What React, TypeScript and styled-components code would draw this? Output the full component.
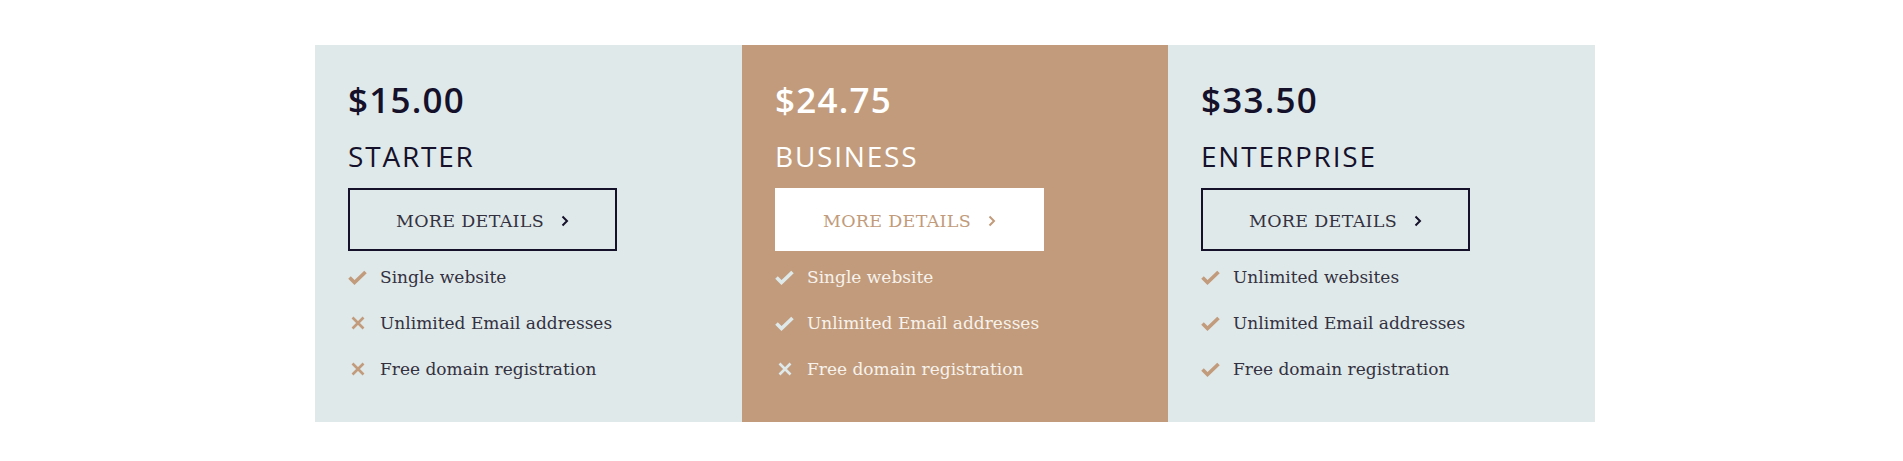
import styled, { createGlobalStyle } from "styled-components";

const GlobalStyle = createGlobalStyle`
  body {
    margin: 0;
    background: #ffffff;
  }
`;

const Section = styled.section`
  padding: 45px 0 39px 315px;
`;

const Plans = styled.div`
  display: grid;
  grid-template-columns: 427px 426px 427px;
`;

const Card = styled.div<{ $featured?: boolean }>`
  height: 377px;
  box-sizing: border-box;
  padding: 38px 33px 0;
  background: ${(p) => (p.$featured ? "#c19b7b" : "#e0e9ea")};
  color: ${(p) => (p.$featured ? "#ffffff" : "#15112b")};
`;

const Price = styled.div`
  font-family: "Open Sans", sans-serif;
  font-weight: 650;
  font-size: 35px;
  line-height: 34px;
  letter-spacing: 1.2px;
`;

const Name = styled.h2`
  margin: 25px 0 0;
  font-family: "Open Sans", sans-serif;
  font-weight: 500;
  font-size: 28px;
  line-height: 29px;
  letter-spacing: 1.8px;
`;

const DetailsButton = styled.a<{ $featured?: boolean }>`
  margin-top: 17px;
  width: 269px;
  height: 63px;
  box-sizing: border-box;
  padding-top: 3px;
  display: flex;
  align-items: center;
  justify-content: center;
  gap: 17px;
  border: 2px solid ${(p) => (p.$featured ? "#ffffff" : "#15112b")};
  background: ${(p) => (p.$featured ? "#ffffff" : "transparent")};
  color: ${(p) => (p.$featured ? "#c19b7b" : "#33313f")};
  font-family: "DejaVu Serif", serif;
  font-size: 17.5px;
  font-weight: 300;
  letter-spacing: 0.3px;
  text-decoration: none;
  cursor: pointer;
`;

const Features = styled.ul`
  list-style: none;
  margin: 14px 0 0;
  padding: 0;
  display: flex;
  flex-direction: column;
  gap: 22px;
`;

const Feature = styled.li<{ $featured?: boolean }>`
  display: flex;
  align-items: center;
  gap: 13px;
  height: 24px;
  font-family: "DejaVu Serif", serif;
  font-size: 17px;
  color: ${(p) => (p.$featured ? "#f7f2ec" : "#33313f")};
`;

const IconBox = styled.span`
  width: 19px;
  display: flex;
  justify-content: center;
`;

const Check = ({ color }: { color: string }) => (
  <svg width="19" height="15" viewBox="0 0 19 15">
    <polyline points="1.5,7.5 6.5,12.5 17.5,2" fill="none" stroke={color} strokeWidth="3.6" />
  </svg>
);

const Cross = ({ color }: { color: string }) => (
  <svg width="14" height="14" viewBox="0 0 14 14">
    <path d="M1.5 1.5 L12.5 12.5 M12.5 1.5 L1.5 12.5" fill="none" stroke={color} strokeWidth="2.6" />
  </svg>
);

const Chevron = ({ color }: { color: string }) => (
  <svg width="8" height="12" viewBox="0 0 8 12">
    <polyline points="1.5,1.5 6,6 1.5,10.5" fill="none" stroke={color} strokeWidth="2" />
  </svg>
);

type Plan = {
  price: string;
  name: string;
  featured?: boolean;
  features: { label: string; included: boolean }[];
};

const plans: Plan[] = [
  {
    price: "$15.00",
    name: "STARTER",
    features: [
      { label: "Single website", included: true },
      { label: "Unlimited Email addresses", included: false },
      { label: "Free domain registration", included: false },
    ],
  },
  {
    price: "$24.75",
    name: "BUSINESS",
    featured: true,
    features: [
      { label: "Single website", included: true },
      { label: "Unlimited Email addresses", included: true },
      { label: "Free domain registration", included: false },
    ],
  },
  {
    price: "$33.50",
    name: "ENTERPRISE",
    features: [
      { label: "Unlimited websites", included: true },
      { label: "Unlimited Email addresses", included: true },
      { label: "Free domain registration", included: true },
    ],
  },
];

export default function App() {
  return (
    <>
      <GlobalStyle />
      <Section>
        <Plans>
          {plans.map((plan) => {
            const iconColor = plan.featured ? "#dfe9ea" : "#c19b7b";
            return (
              <Card key={plan.name} $featured={plan.featured}>
                <Price>{plan.price}</Price>
                <Name>{plan.name}</Name>
                <DetailsButton $featured={plan.featured}>
                  MORE DETAILS
                  <Chevron color={plan.featured ? "#c19b7b" : "#15112b"} />
                </DetailsButton>
                <Features>
                  {plan.features.map((f) => (
                    <Feature key={f.label} $featured={plan.featured}>
                      <IconBox>
                        {f.included ? <Check color={iconColor} /> : <Cross color={iconColor} />}
                      </IconBox>
                      {f.label}
                    </Feature>
                  ))}
                </Features>
              </Card>
            );
          })}
        </Plans>
      </Section>
    </>
  );
}
